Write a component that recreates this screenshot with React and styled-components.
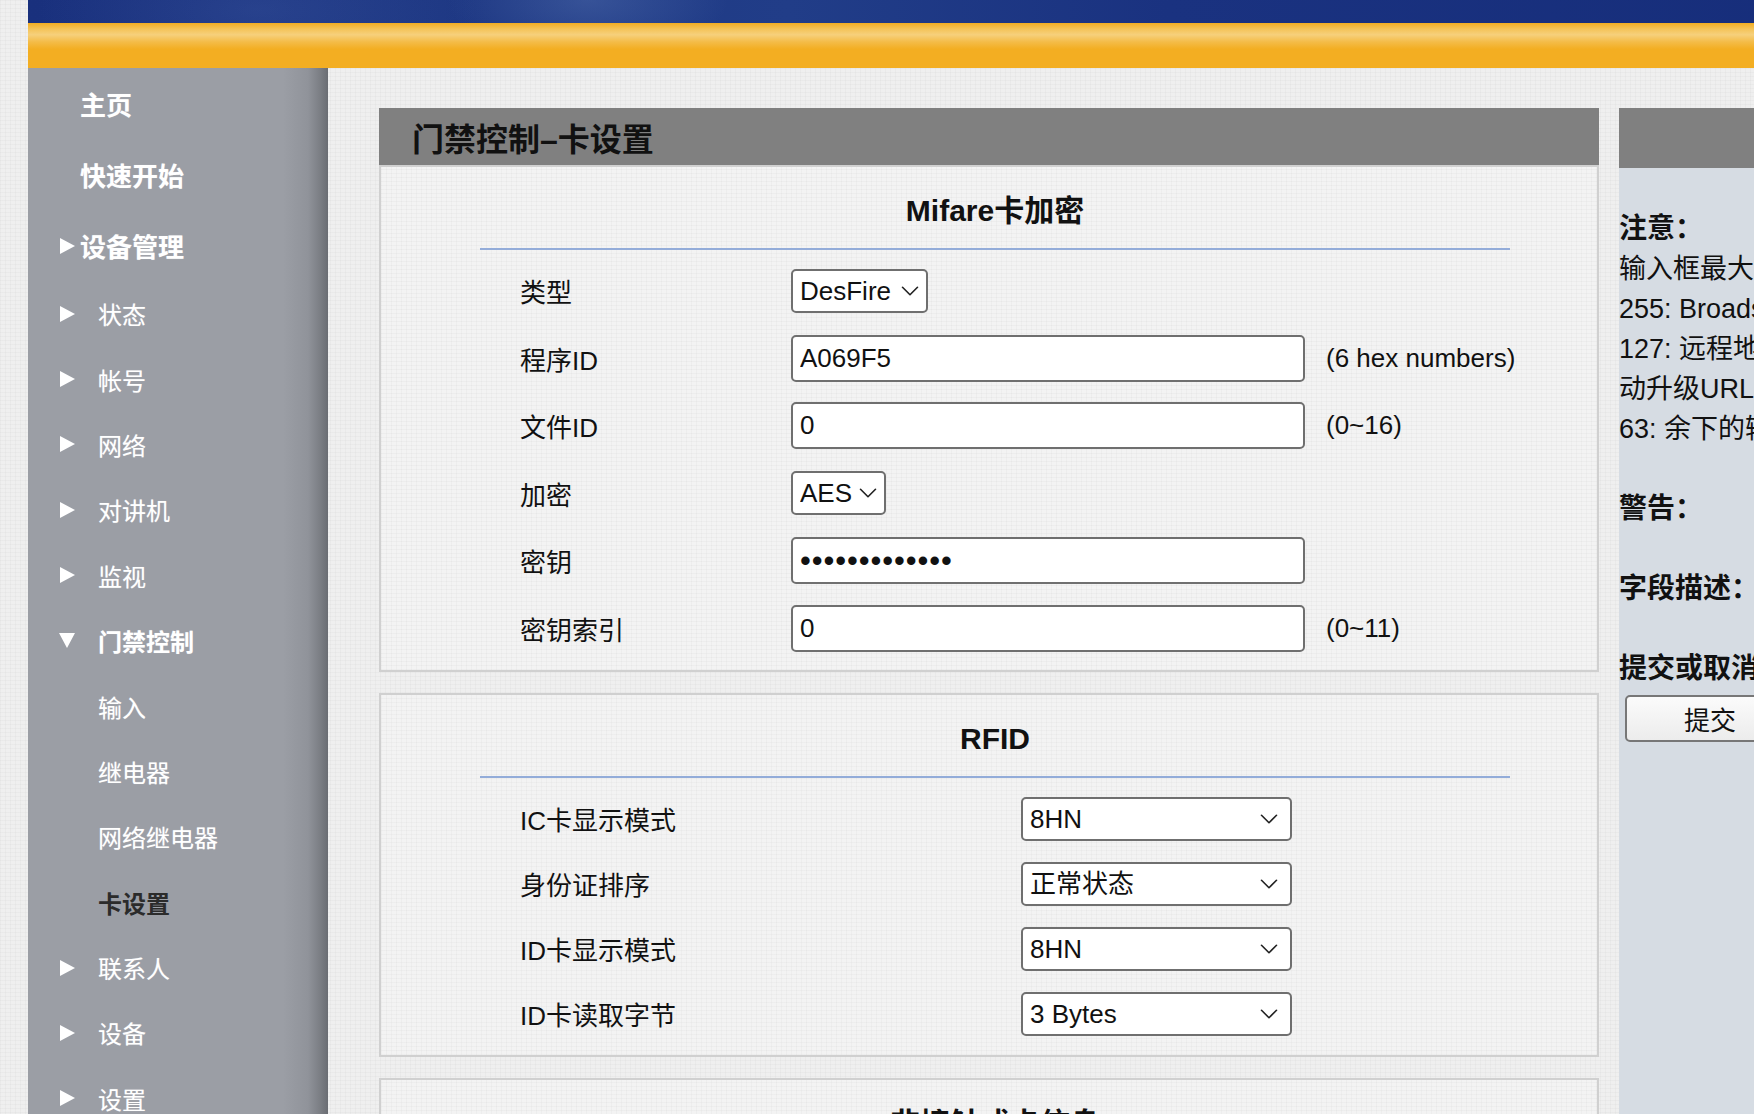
import React from 'react';
import styled, { createGlobalStyle } from 'styled-components';
import { ChevronDown } from 'lucide-react';

const FONT = `"Liberation Sans", "Noto Sans CJK SC", sans-serif`;

const texture = `
  repeating-linear-gradient(0deg, rgba(0,0,0,0.022) 0 1px, transparent 1px 4px),
  repeating-linear-gradient(90deg, rgba(0,0,0,0.022) 0 1px, transparent 1px 5px)
`;

const GlobalStyle = createGlobalStyle`
  html, body { margin: 0; padding: 0; }
  body {
    background-color: #efefef;
    background-image: ${texture};
    font-family: ${FONT};
    overflow: hidden;
  }
`;

const Page = styled.div`
  margin-left: 28px;
  width: 1900px;
  display: flex;
  flex-direction: column;
`;

const BlueBand = styled.div`
  height: 23px;
  background:
    radial-gradient(ellipse 140px 60px at 560px 0, rgba(110, 140, 195, 0.3), transparent),
    radial-gradient(ellipse 220px 80px at 230px 10px, rgba(90, 120, 190, 0.2), transparent),
    linear-gradient(to right, #19307d 0, #213d88 40%, #1a3280 60%, #162d7a 100%);
`;

const OrangeBand = styled.div`
  height: 45px;
  background: linear-gradient(to bottom, #f2ad22 0, #f4c45a 14%, #f6d07c 26%, #f4bc48 42%, #f3ae22 58%, #f3ae22 100%);
`;

const Body = styled.div`
  display: flex;
  align-items: stretch;
`;

const Sidebar = styled.nav`
  width: 300px;
  flex: none;
  min-height: 1046px;
  background: linear-gradient(to right, #9b9ea5 0, #9b9ea5 255px, #90939a 280px, #7b7e84 292px, #6a6d73 300px);
`;

const NavItem = styled.div`
  display: flex;
  align-items: center;
  height: ${p => (p.$top ? 71 : 65.4)}px;
  padding-left: 31px;
  color: ${p => (p.$active ? '#2b2b2b' : '#ffffff')};
  font-size: ${p => (p.$top ? 26 : 24)}px;
  font-weight: ${p => (p.$bold ? 'bold' : 'normal')};
  text-shadow: ${p => (p.$active ? 'none' : '0 0 1px rgba(255,255,255,0.4)')};
`;

const Arrow = styled.span`
  width: 16px;
  height: 18px;
  flex: none;
  display: flex;
  align-items: center;
  justify-content: center;
  &::before {
    content: '';
    display: ${p => (p.$dir ? 'block' : 'none')};
    width: 0;
    height: 0;
    filter: blur(0.4px);
    ${p => (p.$dir === 'down'
      ? 'border-top: 15px solid #fff; border-left: 8.5px solid transparent; border-right: 8.5px solid transparent;'
      : 'border-left: 15px solid #fff; border-top: 8.5px solid transparent; border-bottom: 8.5px solid transparent;')}
  }
`;

const NavLabel = styled.span`
  margin-left: ${p => (p.$sub ? 23 : 5)}px;
  white-space: nowrap;
`;

const Main = styled.main`
  display: flex;
  align-items: flex-start;
  gap: 20px;
  padding: 40px 0 0 51px;
`;

const Panel = styled.section`
  width: 1220px;
  flex: none;
`;

const PanelTitle = styled.h1`
  margin: 0;
  height: 57px;
  display: flex;
  align-items: center;
  padding-left: 33px;
  background: #808080;
  color: #111;
  font-size: 32px;
  font-weight: bold;
`;

const Box = styled.div`
  border: 2px solid #d0d0d0;
  background-color: #f3f3f3;
  background-image: ${texture};
  padding: 26px 0 ${p => p.$pb || 0}px;
  margin-top: ${p => p.$mt || 0}px;
`;

const SectionHead = styled.div`
  margin: 0 87px 0 99px;
  border-bottom: 2px solid #93acd9;
`;

const SectionTitle = styled.h2`
  margin: 0 0 19px;
  height: 36px;
  line-height: 36px;
  text-align: center;
  font-size: 30px;
  font-weight: bold;
  color: #111;
`;

const Rows = styled.div`
  padding: ${p => p.$mt}px 0 0 139px;
`;

const Row = styled.div`
  display: grid;
  grid-template-columns: ${p => p.$labelW}px auto auto;
  justify-content: start;
  align-items: center;
  height: ${p => p.$h}px;
  font-size: 26px;
  color: #111;
`;

const Label = styled.span`
  white-space: nowrap;
`;

const TextInput = styled.input`
  box-sizing: border-box;
  width: 514px;
  height: 47px;
  padding: 0 7px;
  border: 2px solid #6f6f6f;
  border-radius: 5px;
  background: #fff;
  font-family: ${FONT};
  font-size: 26px;
  color: #111;
  outline: none;
  &[type='password'] {
    font-size: 31px;
    letter-spacing: 0.9px;
  }
`;

const SelectWrap = styled.div`
  position: relative;
  width: ${p => p.$w}px;
  height: 44px;
`;

const Select = styled.select`
  appearance: none;
  box-sizing: border-box;
  width: 100%;
  height: 100%;
  padding: 0 0 0 7px;
  border: 2px solid #6f6f6f;
  border-radius: 5px;
  background: #fff;
  font-family: ${FONT};
  font-size: 26px;
  color: #111;
  outline: none;
`;

const Chevron = styled(ChevronDown)`
  position: absolute;
  right: ${p => p.$r}px;
  top: 50%;
  transform: translateY(-50%);
  pointer-events: none;
  color: #222;
`;

const Hint = styled.span`
  margin-left: 21px;
  white-space: nowrap;
`;

const Aside = styled.aside`
  width: 420px;
  flex: none;
  min-height: 1010px;
  background: #d6dce3;
`;

const AsideBar = styled.div`
  height: 60px;
  background: #808080;
`;

const Notes = styled.div`
  padding-top: 41px;
  font-size: 27px;
  line-height: 40px;
  color: #111;
  white-space: nowrap;
`;

const NoteHead = styled.div`
  font-size: 28px;
  font-weight: bold;
  margin-top: ${p => (p.$gap ? 40 : 0)}px;
`;

const SubmitButton = styled.button`
  box-sizing: border-box;
  margin: 6px 0 0 6px;
  width: 170px;
  height: 47px;
  border: 2px solid #777;
  border-radius: 5px;
  background: linear-gradient(#fbfbfb, #ececec);
  font-family: ${FONT};
  font-size: 26px;
  color: #111;
`;

const Dropdown = ({ w, value, r = 9 }) => (
  <SelectWrap $w={w}>
    <Select defaultValue={value}>
      <option>{value}</option>
    </Select>
    <Chevron size={30} strokeWidth={1.3} $r={r} />
  </SelectWrap>
);

const nav = [
  { label: '主页', top: true, bold: true },
  { label: '快速开始', top: true, bold: true },
  { label: '设备管理', top: true, bold: true, arrow: 'right' },
  { label: '状态', arrow: 'right' },
  { label: '帐号', arrow: 'right' },
  { label: '网络', arrow: 'right' },
  { label: '对讲机', arrow: 'right' },
  { label: '监视', arrow: 'right' },
  { label: '门禁控制', arrow: 'down', bold: true },
  { label: '输入' },
  { label: '继电器' },
  { label: '网络继电器' },
  { label: '卡设置', active: true, bold: true },
  { label: '联系人', arrow: 'right' },
  { label: '设备', arrow: 'right' },
  { label: '设置', arrow: 'right' },
];

const rfid = [
  { label: 'IC卡显示模式', value: '8HN' },
  { label: '身份证排序', value: '正常状态' },
  { label: 'ID卡显示模式', value: '8HN' },
  { label: 'ID卡读取字节', value: '3 Bytes' },
];

const App = () => (
  <>
    <GlobalStyle />
    <Page>
      <BlueBand />
      <OrangeBand />
      <Body>
        <Sidebar>
          {nav.map(item => (
            <NavItem key={item.label} $top={item.top} $bold={item.bold} $active={item.active}>
              <Arrow $dir={item.arrow} />
              <NavLabel $sub={!item.top}>{item.label}</NavLabel>
            </NavItem>
          ))}
        </Sidebar>
        <Main>
          <Panel>
            <PanelTitle>门禁控制–卡设置</PanelTitle>
            <Box $pb={8}>
              <SectionHead>
                <SectionTitle>Mifare卡加密</SectionTitle>
              </SectionHead>
              <Rows $mt={7}>
                <Row $labelW={271} $h={67.5}>
                  <Label>类型</Label>
                  <Dropdown w={137} value="DesFire" r={3} />
                </Row>
                <Row $labelW={271} $h={67.5}>
                  <Label>程序ID</Label>
                  <TextInput defaultValue="A069F5" />
                  <Hint>(6 hex numbers)</Hint>
                </Row>
                <Row $labelW={271} $h={67.5}>
                  <Label>文件ID</Label>
                  <TextInput defaultValue="0" />
                  <Hint>(0~16)</Hint>
                </Row>
                <Row $labelW={271} $h={67.5}>
                  <Label>加密</Label>
                  <Dropdown w={95} value="AES" r={3} />
                </Row>
                <Row $labelW={271} $h={67.5}>
                  <Label>密钥</Label>
                  <TextInput type="password" defaultValue="0000000000000" />
                </Row>
                <Row $labelW={271} $h={67.5}>
                  <Label>密钥索引</Label>
                  <TextInput defaultValue="0" />
                  <Hint>(0~11)</Hint>
                </Row>
              </Rows>
            </Box>
            <Box $mt={21} $pb={9}>
              <SectionHead>
                <SectionTitle>RFID</SectionTitle>
              </SectionHead>
              <Rows $mt={8}>
                {rfid.map(r => (
                  <Row key={r.label} $labelW={501} $h={65}>
                    <Label>{r.label}</Label>
                    <Dropdown w={271} value={r.value} r={8} />
                  </Row>
                ))}
              </Rows>
            </Box>
            <Box $mt={21} $pb={40}>
              <SectionHead>
                <SectionTitle>非接触式卡信息</SectionTitle>
              </SectionHead>
            </Box>
          </Panel>
          <Aside>
            <AsideBar />
            <Notes>
              <NoteHead>注意：</NoteHead>
              <div>输入框最大字符数：</div>
              <div>255: Broadsoft电话本URL，</div>
              <div>127: 远程地址簿URL，自</div>
              <div>动升级URL</div>
              <div>63: 余下的输入框</div>
              <NoteHead $gap>警告：</NoteHead>
              <NoteHead $gap>字段描述：</NoteHead>
              <NoteHead $gap>提交或取消：</NoteHead>
              <SubmitButton>提交</SubmitButton>
            </Notes>
          </Aside>
        </Main>
      </Body>
    </Page>
  </>
);

export default App;
